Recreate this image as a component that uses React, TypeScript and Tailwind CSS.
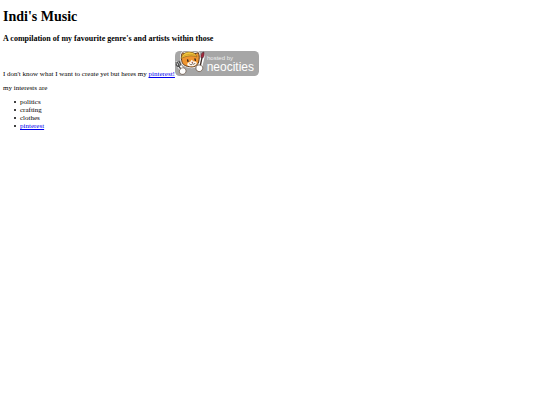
const interests = ['politics', 'crafting', 'clothes']

function NeocitiesBadge() {
  return (
    <svg
      viewBox="0 0 252 75"
      role="img"
      aria-label="hosted by neocities"
      className="h-[25px] w-[84px] shrink-0"
    >
      <rect width="252" height="75" rx="14" fill="#a6a6a6" />

      {/* fork */}
      <path d="M6 36 L24 60" stroke="#fff" strokeWidth="12" strokeLinecap="round" />
      <g fill="none" stroke="#4a4a4a" strokeWidth="4" strokeLinecap="round">
        <path d="M10 44 L22 60" />
        <path d="M3 34 C2 44 10 50 15 43 C18 38 14 34 12 31" />
        <path d="M7 33 L11 41" />
      </g>

      {/* brush */}
      <path d="M84 12 L76 46" stroke="#fff" strokeWidth="12" strokeLinecap="round" />
      <path d="M81 20 L75 48" stroke="#3b2a24" strokeWidth="4" strokeLinecap="round" />
      <path d="M77 19 C77 9 81 5 86 3 C89 11 87 17 83 21 Z" fill="#a52b3c" stroke="#44202a" strokeWidth="2" />

      {/* cat */}
      <path
        d="M20 28 C18 18 19 9 23 5 L31 9 C40 3 51 3 59 8 L70 5 C74 13 73 24 71 33 C67 46 54 50 42 47 C28 45 21 39 20 28 Z"
        fill="#ef9530"
        stroke="#fff"
        strokeWidth="7"
      />
      <path
        d="M20 28 C18 18 19 9 23 5 L31 9 C40 3 51 3 59 8 L70 5 C74 13 73 24 71 33 C67 46 54 50 42 47 C28 45 21 39 20 28 Z"
        fill="#ef9530"
        stroke="#55351c"
        strokeWidth="3"
      />
      <path d="M50 26 L55 31 C62 31 67 34 65 38 C61 46 48 48 39 44 C34 40 38 34 45 34 Z" fill="#fff8ee" />
      <path d="M18 23 C22 8 32 3 44 3 C56 4 63 9 66 18 C52 12 33 14 18 23 Z" fill="#f5cb3e" stroke="#8b641d" strokeWidth="2" />
      <path d="M25 16 C35 9 50 8 61 13" fill="none" stroke="#c78b20" strokeWidth="2" />
      <g stroke="#302019" strokeWidth="4" strokeLinecap="round" fill="none">
        <path d="M38 27 L39 31" />
        <path d="M60 24 L61 28" />
        <path d="M44 39 C48 43 51 41 52 38 C55 41 58 40 60 37" strokeWidth="2" />
      </g>
      <path d="M49 33 L55 32 L52 37 Z" fill="#873b35" />

      {/* paws */}
      <g fill="#fff" stroke="#5a4330" strokeWidth="2">
        <path d="M14 57 C17 50 27 48 31 54 C36 61 31 69 24 70 C16 71 11 64 14 57 Z" />
        <path d="M64 46 C68 40 80 41 83 48 C85 55 79 62 72 62 C64 61 61 53 64 46 Z" />
      </g>

      <text x="96" y="28" fontSize="18" fill="#eeeeee" fontFamily="'Liberation Sans', sans-serif">
        hosted by
      </text>
      <text x="95" y="60" fontSize="36" fill="#ffffff" fontFamily="'Liberation Sans', sans-serif">
        neocities
      </text>
    </svg>
  )
}

function PinterestLink({ children }: { children: string }) {
  return (
    <a href="https://www.pinterest.com" className="text-[#0000ee] underline">
      {children}
    </a>
  )
}

const bullet =
  "flex items-center gap-1 before:size-[2px] before:rounded-full before:bg-black before:content-['']"

export default function App() {
  return (
    <main className="px-[3px] py-2 font-['Liberation_Serif',serif] text-[7px] leading-[8px] text-black">
      <h1 className="text-[14px] leading-[18px] font-bold">Indi's Music</h1>
      <h3 className="mt-2 text-[8px] leading-[9px] font-bold">
        A compilation of my favourite genre's and artists within those
      </h3>
      <div className="mt-2 flex items-baseline">
        <p>
          I don't know what I want to create yet but heres my <PinterestLink>pinterest!</PinterestLink>
        </p>
        <NeocitiesBadge />
      </div>
      <p className="mt-[6px]">my interests are</p>
      <ul className="mt-[6px] pl-[11px]">
        {interests.map((interest) => (
          <li key={interest} className={bullet}>
            {interest}
          </li>
        ))}
        <li className={bullet}>
          <PinterestLink>pinterest</PinterestLink>
        </li>
      </ul>
    </main>
  )
}
